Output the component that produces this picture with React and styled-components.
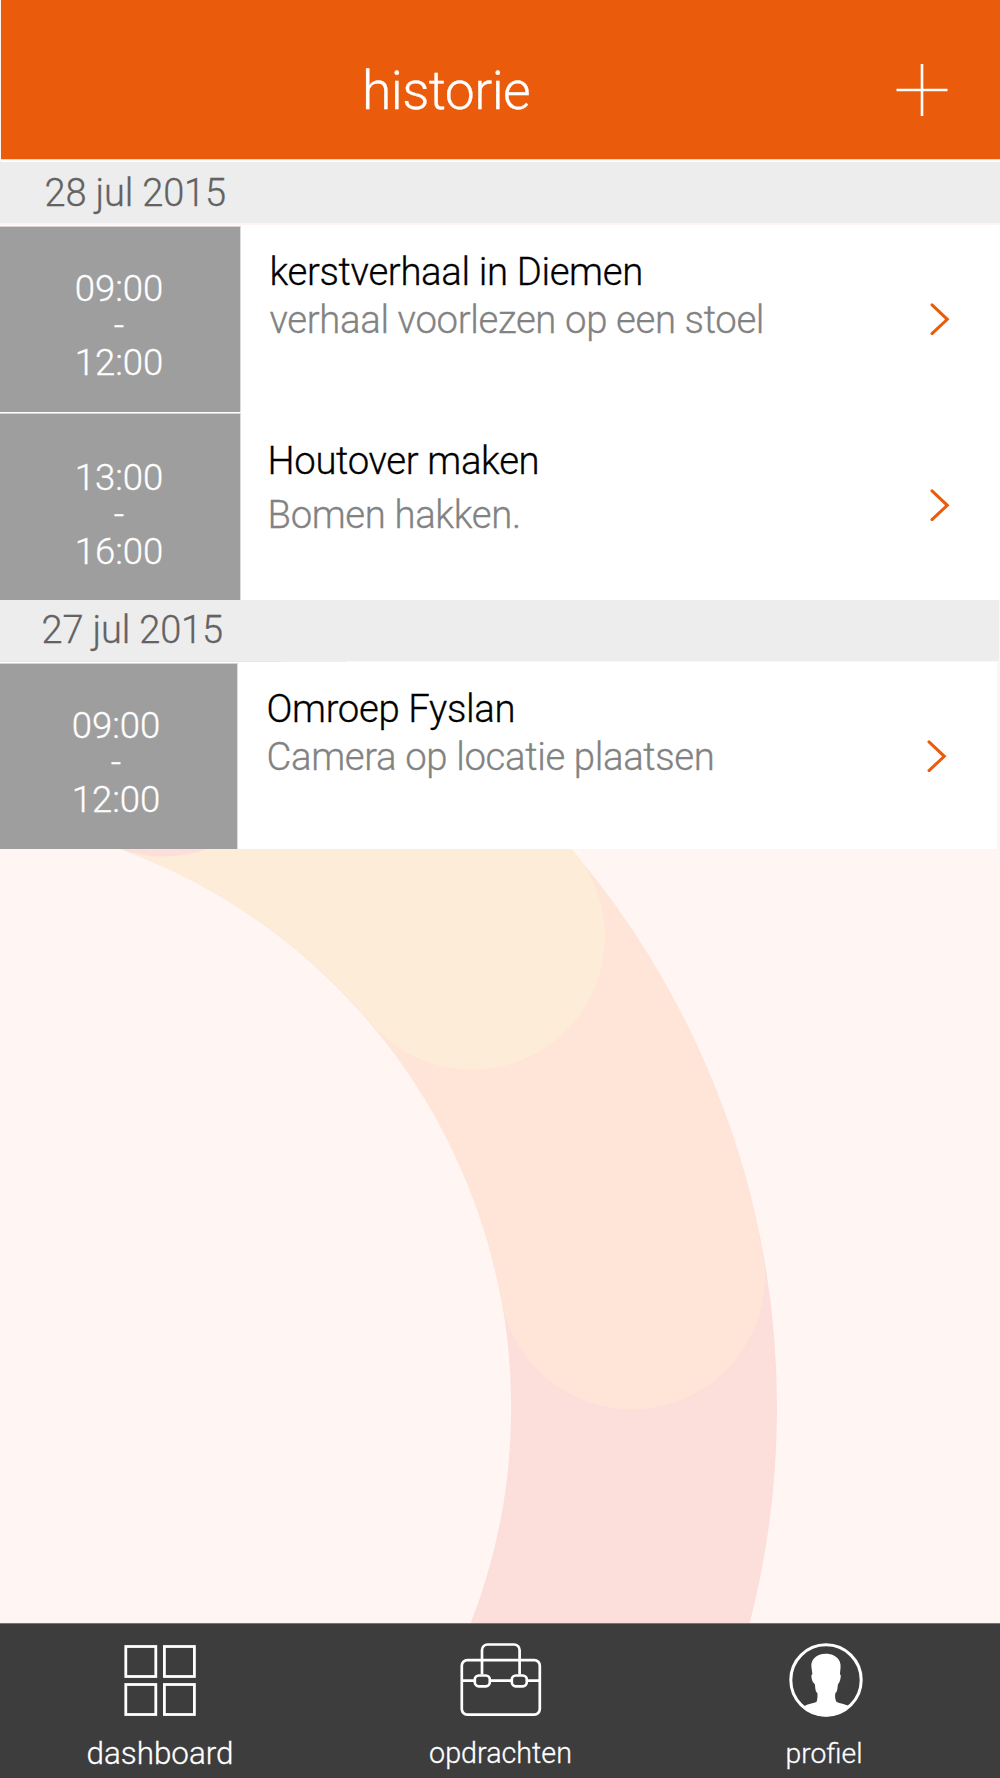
// App.jsx
import React from "react";
import styled, { createGlobalStyle } from "styled-components";

const GlobalStyle = createGlobalStyle`
  * {
    box-sizing: border-box;
  }

  body {
    margin: 0;
    background-color: #fff6f3;
    font-family: Roboto, "Liberation Sans", sans-serif;
    font-weight: 300;
    -webkit-text-stroke: 0.3px currentColor;
  }
`;

const Screen = styled.div`
  position: relative;
  display: flex;
  flex-direction: column;
  width: 1000px;
  height: 1778px;
  overflow: hidden;
  background-color: #fff6f3;
`;

const RingSvg = styled.svg`
  position: absolute;
  top: 0;
  left: 0;
`;

const Header = styled.header`
  position: relative;
  display: flex;
  align-items: center;
  justify-content: space-between;
  height: 162px;
  padding: 20px 52px 3px 361px;
  border-left: 1px solid #fdf3ee;
  background: linear-gradient(#ea5b0c 159px, #fbd3bd 159px, #fbd3bd 160px, #fffdfc 160px);
`;

const Title = styled.h1`
  margin: 2px 0 0;
  color: white;
  font-size: 53.5px;
  font-weight: 300;
  letter-spacing: -0.6px;
  line-height: 60px;
`;

const IconButton = styled.button`
  display: flex;
  padding: 0;
  border: none;
  background: none;
  cursor: pointer;
`;

const List = styled.main`
  position: relative;
  flex: 1;
`;

const Day = styled.section`
  width: ${({ $shift }) => ($shift ? "1002px" : "1000px")};
  margin-left: ${({ $shift }) => ($shift ? "-3px" : "0")};
`;

const DayLabel = styled.h2`
  height: 61px;
  margin: 0 0 ${({ $gap }) => $gap}px;
  padding-left: 44.5px;
  background-color: #ededed;
  color: #626262;
  font-size: 38px;
  font-weight: 300;
  letter-spacing: -0.15px;
  line-height: ${({ $line }) => $line}px;
`;

const Row = styled.article`
  display: flex;
  width: 1000px;
  height: ${({ $height }) => $height}px;
  padding-top: 1px;
  background-color: white;
`;

const Time = styled.div`
  width: 241px;
  padding: ${({ $pad }) => $pad}px 2px 0 0;
  border-top: 1px solid #d4d4d4;
  border-right: 1px solid #dcdcdc;
  background-color: #9e9e9e;
  color: white;
  font-size: 36.5px;
  line-height: 37px;
  text-align: center;
`;

const Info = styled.div`
  flex: 1;
  padding: ${({ $pad }) => $pad}px 0 0 ${({ $left }) => $left}px;
  font-size: 38.3px;
  letter-spacing: -0.35px;
  line-height: ${({ $line }) => $line}px;
`;

const Name = styled.div`
  color: black;
`;

const Description = styled.div`
  color: #828282;
`;

const Arrow = styled.svg`
  flex: none;
  margin: ${({ $top }) => $top}px 50px 0 0;
`;

const TabBar = styled.nav`
  position: relative;
  display: grid;
  grid-template-columns: 320px 361px 290px;
  height: 155px;
  border-top: 1px solid #777472;
  background-color: #3d3d3d;
`;

const Tab = styled.a`
  display: flex;
  flex-direction: column;
  align-items: center;
  padding-top: 16px;
  color: white;
  cursor: pointer;
`;

const TabLabel = styled.span`
  margin: ${({ $top }) => $top}px ${({ $right }) => $right || 0}px 0 0;
  font-size: ${({ $size }) => $size}px;
  font-weight: 300;
  line-height: 40px;
`;

const days = [
  {
    date: "28 jul 2015",
    gap: 2,
    line: 62,
    events: [
      {
        from: "09:00", to: "12:00", name: "kerstverhaal in Diemen", text: "verhaal voorlezen op een stoel",
        height: 187, pad: 43, infoPad: 22, infoLeft: 28.5, infoLine: 48, arrow: 77,
      },
      {
        from: "13:00", to: "16:00", name: "Houtover maken", text: "Bomen hakken.",
        height: 188, pad: 45, infoPad: 21, infoLeft: 26.5, infoLine: 54, arrow: 76,
      },
    ],
  },
  {
    date: "27 jul 2015",
    gap: 1,
    line: 61,
    shift: true,
    events: [
      {
        from: "09:00", to: "12:00", name: "Omroep Fyslan", text: "Camera op locatie plaatsen",
        height: 187, pad: 43, infoPad: 22, infoLeft: 28.5, infoLine: 48, arrow: 77,
      },
    ],
  },
];

const Ring = () => (
  <RingSvg width="1000" height="1778" viewBox="0 0 1000 1778" fill="none" strokeWidth="265.8">
    <circle cx="-83.3" cy="1407.5" r="727.4" stroke="#fcdeda" />
    <g strokeLinecap="round">
      <path d="M164 723.5A727.4 727.4 0 0 1 632 1276.500" stroke="#fee5d8" />
      <path d="M164 723.5A727.4 727.4 0 0 1 472 936.700" stroke="#fdecd7" />
      <path d="M-83.3 680.1A727.4 727.4 0 0 1 164 723.5" stroke="#fcdeda" />
    </g>
  </RingSvg>
);

const PlusIcon = () => (
  <svg width="52" height="54" viewBox="0 0 52 54" stroke="white" strokeWidth="2.6">
    <path d="M26 1v52M0.5 27h51" />
  </svg>
);

const DashboardIcon = () => (
  <svg width="74" height="76" viewBox="0 0 74 76" fill="none" stroke="white" strokeWidth="2.8">
    <rect x="2.8" y="6.5" width="30" height="30" />
    <rect x="41.4" y="6.5" width="30" height="30" />
    <rect x="2.8" y="44.5" width="30" height="30" />
    <rect x="41.4" y="44.5" width="30" height="30" />
  </svg>
);

const BriefcaseIcon = () => (
  <svg width="84" height="76" viewBox="0.7 0 84 76" fill="none" stroke="white" strokeWidth="2.7">
    <rect x="3.5" y="20.2" width="78" height="54.4" rx="5.5" />
    <path d="M23.7 34.5V10a5.5 5.5 0 0 1 5.5-5.5h26.6a5.5 5.5 0 0 1 5.5 5.5v24.5" />
    <path d="M3.5 40.7h13M32 40.7h21M68.5 40.7h13" />
    <rect x="16.5" y="35.5" width="15" height="10.8" rx="4" />
    <rect x="53.5" y="35.5" width="15" height="10.8" rx="4" />
  </svg>
);

const ProfileIcon = () => (
  <svg width="76" height="78" viewBox="0 0 76 78">
    <circle cx="38" cy="40" r="35.2" fill="none" stroke="white" strokeWidth="3" />
    <path
      fill="white"
      d="M38 13.8c5.5 0 9.8 2.2 12.4 5.5c2.2 2.8 2.6 6.3 1.9 10.9l-.4 4.1c1.1.2 1 1.9.7 3.5c-.4 2.7-1.3 5.3-2.5 6.2c-.4 1.1-.6 5.3-1.2 7.1c-.3 1-.8 1.5-1.5 2c-.6 2.8-.4 6.7 1.2 9c3.5 1.7 7.8 1.8 12.4 3.9C55 73.2 47 76.5 38 76.5S21 73.2 15.7 66.5c4.3-2.6 8.9-2.7 12.7-4.4c1.2-2.3 1.2-6.2 1-9c-1-.6-1.6-1.7-1.8-3c-.5-2.3-.4-4.9-.9-6c-1.9-1.4-2.9-4.3-3.2-6.9c-.2-1.6 0-2.7.9-2.9l-.8-6c-.7-4.9.3-7.3 2.3-9.8c2.6-3 6.6-4.7 12.1-4.7z"
    />
  </svg>
);

const EventRow = ({ event }) => {
  return (
    <Row $height={event.height}>
      <Time $pad={event.pad}>
        <div>{event.from}</div>
        <div>-</div>
        <div>{event.to}</div>
      </Time>
      <Info $pad={event.infoPad} $left={event.infoLeft} $line={event.infoLine}>
        <Name>{event.name}</Name>
        <Description>{event.text}</Description>
      </Info>
      <Arrow $top={event.arrow} width="20" height="32" viewBox="0 0 20 32">
        <path d="M2 1.8L17.3 16.3L2 30.6" fill="none" stroke="#ea5b0c" strokeWidth="3" strokeLinecap="round" />
      </Arrow>
    </Row>
  );
};

const App = () => {
  return (
    <>
      <GlobalStyle />
      <Screen>
        <Ring />
        <Header>
          <Title>historie</Title>
          <IconButton aria-label="toevoegen">
            <PlusIcon />
          </IconButton>
        </Header>
        <List>
          {days.map((day) => (
            <Day key={day.date} $shift={day.shift}>
              <DayLabel $gap={day.gap} $line={day.line}>{day.date}</DayLabel>
              {day.events.map((event) => (
                <EventRow key={event.name} event={event} />
              ))}
            </Day>
          ))}
        </List>
        <TabBar>
          <Tab>
            <DashboardIcon />
            <TabLabel $size={31.4} $top={18}>dashboard</TabLabel>
          </Tab>
          <Tab>
            <BriefcaseIcon />
            <TabLabel $size={28.7} $top={17}>opdrachten</TabLabel>
          </Tab>
          <Tab>
            <ProfileIcon />
            <TabLabel $size={28.3} $top={16} $right={4}>profiel</TabLabel>
          </Tab>
        </TabBar>
      </Screen>
    </>
  );
};

export default App;
